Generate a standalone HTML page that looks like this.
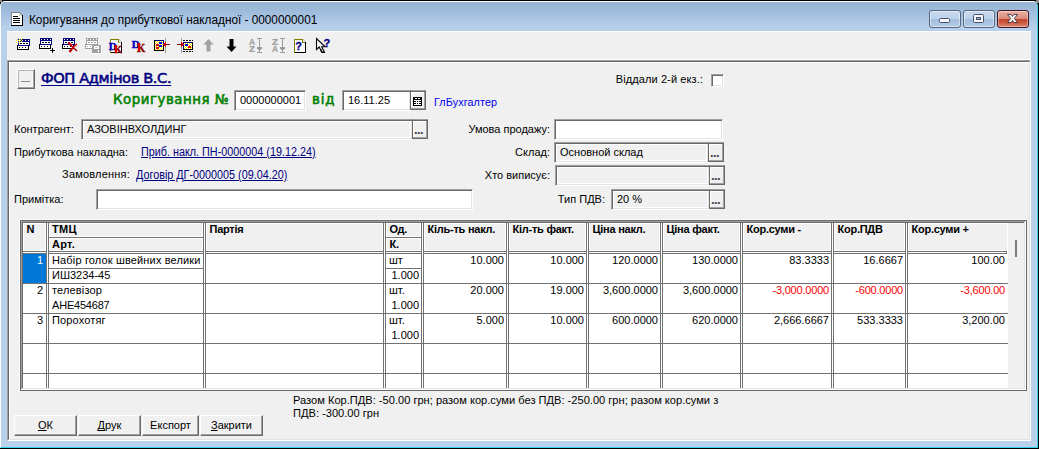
<!DOCTYPE html>
<html lang="uk"><head><meta charset="utf-8"><title>Коригування до прибуткової накладної</title>
<style>
*{box-sizing:border-box;margin:0;padding:0}
html,body{width:1039px;height:449px;overflow:hidden;background:#000}
body{font-family:"Liberation Sans",sans-serif;font-size:12px;color:#000;position:relative}
#win *{position:absolute}
#win u{position:static}
#win{position:absolute;left:0;top:0;width:1039px;height:449px;background:#000;overflow:hidden}
#frame{left:0;top:1px;width:1038px;height:447px;border:1px solid;border-color:#fdfeff #3ad6f0 #2fd3ee #fdfeff;border-radius:5px 5px 0 0;background:#b9d1ea}
#tbar{left:1px;top:2px;width:1036px;height:60px;border-radius:4px 4px 0 0;background:linear-gradient(#98b4d4 0,#9dbadb 8px,#a9c4e3 16px,#b5ceea 24px,#b9d1ea 30px,#b9d1ea 100%)}
#title{left:29px;top:13px;font-size:12.5px;line-height:15px;white-space:nowrap;color:#000;transform:scaleX(0.943);transform-origin:0 0}
#client{left:7px;top:31px;width:1024px;height:410px;background:#f0f0f0}
#tline0{left:7px;top:31px;width:1024px;height:1px;background:#fdfdfd}
#tline{left:7px;top:59px;width:1024px;height:1px;background:#fbfbfb}
.cb{border:1px solid #56657d;border-radius:3px;background:linear-gradient(#c6d8ef 0,#bdd2ec 47%,#a2bcdb 50%,#b3cbe7 100%);box-shadow:inset 0 0 0 1px rgba(255,255,255,.5)}
.cb.cx{border-color:#431422;background:linear-gradient(#ecb0a3 0,#d98c7b 47%,#c2432a 50%,#c85338 70%,#d98672 100%);box-shadow:inset 0 0 0 1px rgba(255,255,255,.4)}
#panel{left:7px;top:60px;width:1024px;height:381px;border:1px solid;border-color:#a0a0a0 #fff #fff #a0a0a0}
#panel2{left:8px;top:61px;width:1022px;height:379px;border:1px solid;border-color:#696969 #e3e3e3 #e3e3e3 #696969;box-shadow:inset 1px 1px 0 #fff}
.lbl{white-space:nowrap;line-height:14px;font-size:11px}
.r{text-align:right}
.inp{border:1px solid;border-color:#a0a0a0 #fff #fff #a0a0a0;box-shadow:inset 1px 1px 0 #696969,inset -1px -1px 0 #e3e3e3;background:#fff;font-size:11px;line-height:15px;padding:2px 0 0 5px;white-space:nowrap;overflow:hidden}
.inp.g{background:#f0f0f0;box-shadow:inset 1px 1px 0 #696969,inset -1px -1px 0 #e3e3e3,inset 2px 2px 0 #fff,inset -2px -2px 0 #fff}
.btn{background:#f0f0f0;border:1px solid;border-color:#fff #696969 #696969 #fff;box-shadow:inset -1px -1px 0 #a0a0a0;text-align:center}
.dots{font-weight:bold;font-size:11px;line-height:17px;letter-spacing:0}
.bb{font-size:11px;line-height:18px}
.link{color:#000080;text-decoration:underline;white-space:nowrap}
#org{font-family:"DejaVu Sans","Liberation Sans",sans-serif;font-weight:normal;font-size:14.67px;line-height:18px;letter-spacing:-0.4px;-webkit-text-stroke:0.55px #000080;text-decoration-skip-ink:none;text-underline-offset:2px;text-decoration-thickness:1px}
.big{font-family:"DejaVu Sans","Liberation Sans",sans-serif;font-weight:normal;font-size:13.33px;line-height:18px;letter-spacing:0.55px;-webkit-text-stroke:0.55px #008000;color:#008000;white-space:nowrap}
.s{font-size:12px;transform:scaleX(0.9);transform-origin:0 0}
.ebtn{background:#f0f0f0;border:1px solid;border-color:#a0a0a0 #696969 #696969 #696969;box-shadow:inset 0 1px 0 #696969,inset -1px -1px 0 #a0a0a0,inset 1px 2px 0 #fff}
#win .ebtn b{left:1px;top:2px;font-size:13px;line-height:15px;letter-spacing:-0.6px;color:#444;font-weight:bold}
#grid{left:19px;top:219px;width:1008px;height:172px;overflow:hidden}
.gf0{background:#fcfcfc}
.gf1{background:#696969}
.gf2{background:#a0a0a0;border:solid #fff;border-width:0 1px 1px 0}
.gf3{background:#696969;border:solid #e3e3e3;border-width:0 1px 1px 0}
.hbg{background:#fff}
.gbg{background:#fff}
.hc{background:#f0f0f0;border:1px solid #fff;font-weight:bold;font-size:11px;line-height:11px;letter-spacing:-.25px;padding:0 0 0 2.5px;white-space:nowrap;overflow:hidden}
.vl,.hl{background:#727272}
.wl{background:#fff}
.dc{font-size:11px;line-height:15px;white-space:nowrap;overflow:hidden}
.sel{background:#0078d7}
.sb{background:#f0f0f0}
.thumb{background:#7e7e7e}
.tx{letter-spacing:.15px}
#win u{text-decoration-skip-ink:none}
</style></head><body>
<div id="win">
<div style="left:0;top:0;width:2px;height:2px;background:#8e8e8e"></div><div style="left:1036px;top:0;width:3px;height:3px;background:#8e8e8e"></div>
<div id="frame"></div>
<div id="tbar"></div>
<svg id="ticon" style="left:11px;top:12px" width="12" height="14" viewBox="0 0 12 14" shape-rendering="crispEdges"><path d="M0 0h8l4 4v10h-12z" fill="#000"/><path d="M0 0h8l3 3v10h-11z" fill="#808080"/><path d="M1 1h7v3h3v9h-10z" fill="#fff"/><path d="M8 1l3 3h-3z" fill="#d8d8d8"/><path d="M2 4.500h5M2 6.500h7M2 8.500h7M2 10.500h7" stroke="#000"/></svg>
<div id="title">Коригування до прибуткової накладної - 0000000001</div>
<div class="cb" style="left:929px;top:10px;width:32px;height:18px"></div>
<div class="cb" style="left:963px;top:10px;width:32px;height:18px"></div>
<div class="cb cx" style="left:997px;top:10px;width:32px;height:18px"></div>
<svg style="left:929px;top:10px" width="100" height="18" viewBox="929 10 100 18"><rect x="939.500" y="18.500" width="10" height="4" rx="1" fill="#f6f8fb" stroke="#47526a"/><rect x="973.500" y="14.500" width="10" height="8" rx="1" fill="#f6f8fb" stroke="#47526a"/><rect x="976.500" y="17.500" width="4" height="2" fill="#9db6d6" stroke="#47526a"/><path d="M1007.500 14.500h3.500l1.500 2 1.500-2h3.500l-3.200 4 3.200 4h-3.500l-1.500-2-1.500 2h-3.500l3.200-4z" fill="#fafafa" stroke="#4b4050" stroke-width="1" stroke-linejoin="round"/></svg>
<div id="client"></div><div id="tline0"></div><div id="tline"></div>
<svg id="tbicons" style="left:8px;top:32px" width="340" height="27" viewBox="8 32 340 27" shape-rendering="crispEdges">
<!-- 1 new table -->
<g>
<rect x="18" y="39" width="12" height="7" fill="#000080"/>
<path d="M22 40.5h1M25 40.5h1M28 40.5h1" stroke="#fff"/>
<rect x="19" y="42" width="10" height="3" fill="#fff"/>
<path d="M20 43.5h2M23 43.5h2M26 43.5h2" stroke="#000"/>
<path d="M17 45h1v1h11v4h-12z" fill="#000"/>
<rect x="18" y="46" width="10" height="3" fill="#fff"/>
<path d="M19 47.5h1M22 47.5h1M25 47.5h1" stroke="#000"/>
<path d="M22 38.5h1M19 39.5h1M21 39.5h1M16 40.5h1M18 40.5h3M19 41.5h1M21 41.5h1M16 42.5h1M19 43.5h1" stroke="#f8f000"/><path d="M19 40.500h1M17 38.500h1M20 38.500h1M17 41.500h1" stroke="#fff"/><path d="M18 38.500h1M18 42.500h1M17 39.500h1" stroke="#b0b0b0"/>
</g>
<!-- 2 add row -->
<g>
<path d="M49 49.500h7M49 50.500h7M49 51.500h7M51 48v6M52 48v6M53 48v6" stroke="#fff" stroke-width="1"/>
<rect x="40" y="38" width="12" height="7" fill="#000080"/>
<path d="M41 39.5h1M44 39.5h1M47 39.5h1M50 39.5h1" stroke="#fff"/>
<rect x="41" y="41" width="10" height="3" fill="#fff"/>
<path d="M42 42.5h2M45 42.5h2M48 42.5h2" stroke="#000"/>
<path d="M39 44h1v1h11v4h-12z" fill="#000"/>
<rect x="40" y="45" width="10" height="3" fill="#fff"/>
<path d="M41 46.5h1M44 46.5h1M47 46.5h1" stroke="#000"/>
<path d="M50 50.500h5M52.500 48v5" stroke="#000"/>
</g>
<!-- 3 delete row -->
<g>
<rect x="63" y="38" width="12" height="7" fill="#000080"/>
<path d="M64 39.5h1M67 39.5h1M70 39.5h1M73 39.5h1" stroke="#fff"/>
<rect x="64" y="41" width="10" height="3" fill="#fff"/>
<path d="M65 42.5h2M68 42.5h2M71 42.5h2" stroke="#000"/>
<path d="M62 44h1v1h11v4h-12z" fill="#000"/>
<rect x="63" y="45" width="10" height="3" fill="#fff"/>
<path d="M64 46.5h1M67 46.5h1M70 46.5h1" stroke="#000"/>
<path d="M68.500 42.500l3 3.500 5.500 5" stroke="#a00000" stroke-width="1.400" shape-rendering="auto" fill="none"/><path d="M68.300 42.800l3.500 3" stroke="#d00000" stroke-width="2" shape-rendering="auto" fill="none"/><path d="M77 44l-4 3.500-3.500 4" stroke="#e00000" stroke-width="1.300" shape-rendering="auto" fill="none"/><path d="M72 49l-2.500 3" stroke="#c00000" stroke-width="2.200" shape-rendering="auto" fill="none"/>
</g>
<!-- 4 disabled copy -->
<g>
<rect x="86" y="38" width="12" height="7" fill="#a0a0a0"/>
<path d="M87 39.5h1M90 39.5h1M93 39.5h1M96 39.5h1" stroke="#fff"/>
<rect x="87" y="41" width="10" height="3" fill="#fff"/>
<path d="M88 42.5h2M91 42.5h2M94 42.5h2" stroke="#a0a0a0"/>
<path d="M85 44h1v1h11v4h-12z" fill="#a0a0a0"/>
<rect x="86" y="45" width="10" height="3" fill="#fff"/>
<path d="M87 46.5h1M90 46.5h1M93 46.5h1" stroke="#a0a0a0"/>
<rect x="93" y="46" width="9" height="8" fill="#fff"/><rect x="92" y="45" width="9" height="8" fill="#a0a0a0"/><rect x="94" y="46" width="5" height="3" fill="#fff"/><path d="M95 47.500h3" stroke="#d0d0d0"/><rect x="98" y="50" width="1" height="2" fill="#fff"/>
</g>
<!-- 5 doc DK -->
<g>
<path d="M119 39l3 3v1h-3z" fill="#c8c8c8"/><path d="M121 42h1v11h-12v-1h11z" fill="#000"/>
<path d="M110 39h9v4h2v9h-10v1h-1z" fill="#808000"/>
<path d="M111 40h7v3h3v9h-10z" fill="#fff"/>
<path d="M119 40l2 2h-2z" fill="#e0e0e0"/>
<text x="108.800" y="50" font-family="Liberation Serif,serif" font-weight="bold" font-size="11" fill="#0000c0" stroke="#0000c0" stroke-width=".45" textLength="8" lengthAdjust="spacingAndGlyphs">D</text>
<text x="114" y="53" font-family="Liberation Serif,serif" font-weight="bold" font-size="11" fill="#880000" stroke="#880000" stroke-width=".4" textLength="8" lengthAdjust="spacingAndGlyphs">K</text>
<rect x="115" y="45" width="2" height="8" fill="#e00000"/>
</g>
<!-- 6 DK -->
<g>
<text x="131.800" y="48" font-family="Liberation Serif,serif" font-weight="bold" font-size="11" fill="#0000c0" stroke="#0000c0" stroke-width=".45" textLength="8" lengthAdjust="spacingAndGlyphs">D</text>
<text x="137" y="51.500" font-family="Liberation Serif,serif" font-weight="bold" font-size="11.500" fill="#880000" stroke="#880000" stroke-width=".4" textLength="8.300" lengthAdjust="spacingAndGlyphs">K</text>
<rect x="138" y="43" width="2" height="8" fill="#e00000"/>
</g>
<!-- 7 box arrow in -->
<g>
<rect x="154" y="40" width="10" height="11" fill="#000"/><path d="M155 40.500h9" stroke="#000080"/><path d="M163.500 40v4" stroke="#000080"/>
<rect x="155" y="41" width="8" height="9" fill="#fff"/>
<path d="M155 41.5h1M157 41.5h1M159 41.5h1M161 41.5h1M156 42.5h1M158 42.5h1M160 42.5h1M162 42.5h1M155 43.5h1M157 43.5h1M159 43.5h1M161 43.5h1M156 44.5h1M158 44.5h1M160 44.5h1M162 44.5h1M155 45.5h1M157 45.5h1M159 45.5h1M161 45.5h1M156 46.5h1M158 46.5h1M160 46.5h1M162 46.5h1M155 47.5h1M157 47.5h1M159 47.5h1M161 47.5h1M156 48.5h1M158 48.5h1M160 48.5h1M162 48.5h1M155 49.5h1M157 49.5h1M159 49.5h1M161 49.5h1" stroke="#f8f000"/>
<rect x="159" y="42" width="3" height="2" fill="#0000e8"/><rect x="159" y="45" width="3" height="2" fill="#0000e8"/><rect x="156" y="44" width="3" height="2" fill="#e80000"/><rect x="156" y="47" width="3" height="2" fill="#e80000"/>
<path d="M165.500 38v15" stroke="#a0a0a0"/>
<path d="M164 44.500h6" stroke="#800000"/><path d="M163 44.500h2M164 43.500h2M164 45.500h2M165 42.500h1M165 46.500h1" stroke="#e80000"/>
</g>
<!-- 8 arrow box out -->
<g>
<path d="M181.500 38v15" stroke="#a0a0a0"/>
<path d="M183 40.500h10M183 51.500h10" stroke="#000" stroke-dasharray="2 1"/>
<rect x="183" y="42" width="10" height="8" fill="#000"/><path d="M183 42.500h10M183.500 42v7" stroke="#000080"/>
<rect x="184" y="43" width="8" height="6" fill="#fff"/>
<path d="M185 43.5h1M187 43.5h1M189 43.5h1M191 43.5h1M184 44.5h1M186 44.5h1M188 44.5h1M190 44.5h1M185 45.5h1M187 45.5h1M189 45.5h1M191 45.5h1M184 46.5h1M186 46.5h1M188 46.5h1M190 46.5h1M185 47.5h1M187 47.5h1M189 47.5h1M191 47.5h1M184 48.5h1M186 48.5h1M188 48.5h1M190 48.5h1" stroke="#f8f000"/>
<rect x="185" y="44" width="3" height="2" fill="#0000e8"/><rect x="188" y="46" width="3" height="2" fill="#e80000"/>
<path d="M177 44.500h6" stroke="#800000"/><path d="M182 44.500h2M181 43.500h2M181 45.500h2M181 42.500h1M181 46.500h1" stroke="#e80000"/>
</g>
<!-- 9 up gray -->
<path d="M208.500 39l5 5.500h-3v7h-4v-7h-3z" fill="#a0a0a0" shape-rendering="auto"/>
<!-- 10 down black -->
<path d="M231.500 52l-5-5.500h3v-7.500h4v7.500h3z" fill="#000" shape-rendering="auto"/>
<!-- 11 AZ -->
<g fill="#9c9c9c" stroke="#9c9c9c">
<text x="249" y="45" font-family="Liberation Sans,sans-serif" font-weight="bold" font-size="8.300" stroke-width=".2" textLength="6" lengthAdjust="spacingAndGlyphs">A</text>
<text x="249" y="52" font-family="Liberation Sans,sans-serif" font-weight="bold" font-size="8.300" stroke-width=".2" textLength="6" lengthAdjust="spacingAndGlyphs">Z</text>
<path d="M257 38.500h5M259.5 38v15M257 47.500h5M257 48.500h5M258 49.500h3M257 52.500h5" fill="none"/>
</g>
<!-- 12 ZA -->
<g fill="#9c9c9c" stroke="#9c9c9c">
<text x="272" y="45" font-family="Liberation Sans,sans-serif" font-weight="bold" font-size="8.300" stroke-width=".2" textLength="6" lengthAdjust="spacingAndGlyphs">Z</text>
<text x="272" y="52" font-family="Liberation Sans,sans-serif" font-weight="bold" font-size="8.300" stroke-width=".2" textLength="6" lengthAdjust="spacingAndGlyphs">A</text>
<path d="M280 38.500h5M282.5 38v15M280 47.500h5M280 48.500h5M281 49.500h3M280 52.500h5" fill="none"/>
</g>
<!-- 13 doc ? -->
<g>
<path d="M303 39l3 3v1h-3z" fill="#c8c8c8"/><path d="M305 42h1v11h-12v-1h11z" fill="#000"/>
<path d="M294 39h9v3h2v10h-10v1h-1z" fill="#808000"/>
<path d="M295 40h7v3h3v9h-10z" fill="#fff"/>
<path d="M303 40l2 2h-2z" fill="#e0e0e0"/>
<text x="295.300" y="50" font-family="Liberation Sans,sans-serif" font-weight="bold" font-size="11" fill="#000080" stroke="#000080" stroke-width=".3" shape-rendering="auto">?</text>
</g>
<!-- 14 cursor ? -->
<g shape-rendering="auto">
<path d="M316.500 38.500v11l2.700-2.500 2.600 5.300 2.700-.1-2.800-5.400h3.500z" fill="#f4f4f4" stroke="#000" stroke-width="1.100"/>
<path d="M320.500 49l1.500 3.300h2.500" fill="none" stroke="#000" stroke-width="1.300"/>
<text x="323.500" y="47" font-family="Liberation Sans,sans-serif" font-weight="bold" font-size="11" fill="#000080" stroke="#000080" stroke-width=".3">?</text>
</g>
</svg>

<div id="panel"></div><div id="panel2"></div>
<div class="btn" style="left:17px;top:69px;width:18px;height:20px;box-shadow:inset -1px -1px 0 #a0a0a0,inset 1px 1px 0 #b4b4b4,inset -2px -2px 0 #fafafa"><div style="left:3px;top:11px;width:9px;height:1px;background:#8c8c8c"></div></div>
<div id="org" class="link" style="left:41px;top:69px">ФОП Адмінов В.С.</div>
<div class="big" style="left:113px;top:91px">Коригування №</div>
<div class="inp" style="left:234px;top:90px;width:72px;height:21px">0000000001</div>
<div class="big" style="left:312px;top:91px;letter-spacing:0.8px">від</div>
<div class="inp" style="left:342px;top:90px;width:69px;height:21px">16.11.25</div>
<div class="ebtn" style="left:410px;top:90px;width:16px;height:20px"><svg style="left:2px;top:6px" width="9" height="9" viewBox="0 0 9 9" shape-rendering="crispEdges"><rect width="9" height="9" fill="#000"/><path d="M2 1.500h2M5 1.500h2M1 3.500h7M1 5.500h7M1 7.500h7M3.500 3v5M5.500 3v5" stroke="#fff"/></svg></div>
<div class="lbl" style="left:433px;top:95px;color:#0000f0;font-size:10.8px;left:434px;letter-spacing:.1px">ГлБухгалтер</div>
<div class="lbl r" style="left:560px;width:143px;top:72px;letter-spacing:.1px">Віддали 2-й екз.:</div>
<div class="inp" style="left:711px;top:74px;width:13px;height:13px;padding:0"></div>
<div class="lbl t" style="left:14px;top:122px">Контрагент:</div>
<div class="inp g" style="left:81px;top:119px;width:332px;height:21px">АЗОВІНВХОЛДИНГ</div>
<div class="ebtn" style="left:412px;top:119px;width:16px;height:20px"><b>...</b></div>
<div class="lbl r" style="left:400px;width:150px;top:122px">Умова продажу:</div>
<div class="inp" style="left:554px;top:119px;width:169px;height:21px"></div>
<div class="lbl t" style="left:14px;top:145px">Прибуткова накладна:</div>
<div class="lbl link s" style="left:141px;top:145px">Приб. накл. ПН-0000004 (19.12.24)</div>
<div class="lbl r" style="left:400px;width:150px;top:145px">Склад:</div>
<div class="inp g" style="left:554px;top:142px;width:155px;height:21px">Основной склад</div>
<div class="ebtn" style="left:708px;top:142px;width:16px;height:20px"><b>...</b></div>
<div class="lbl r t" style="left:0px;width:130px;top:167px;letter-spacing:.2px">Замовлення:</div>
<div class="lbl link s" style="left:136px;top:168px">Договір ДГ-0000005 (09.04.20)</div>
<div class="lbl r" style="left:400px;width:150px;top:168px">Хто виписує:</div>
<div class="inp g" style="left:555px;top:165px;width:155px;height:21px"></div>
<div class="ebtn" style="left:709px;top:165px;width:16px;height:20px"><b>...</b></div>
<div class="lbl t" style="left:14px;top:192px">Примітка:</div>
<div class="inp" style="left:96px;top:189px;width:377px;height:21px"></div>
<div class="lbl r" style="left:500px;width:105px;top:192px">Тип ПДВ:</div>
<div class="inp g" style="left:611px;top:189px;width:99px;height:21px">20 %</div>
<div class="ebtn" style="left:709px;top:189px;width:16px;height:20px"><b>...</b></div>
<div id="grid">
<div class="gf0" style="left:0px;top:0px;width:1008px;height:172px;"></div>
<div class="gf1" style="left:1px;top:1px;width:1007px;height:171px;"></div>
<div class="gf2" style="left:2px;top:2px;width:1005px;height:169px;"></div>
<div class="gf3" style="left:3px;top:3px;width:1003px;height:167px;"></div>
<div class="hbg" style="left:4px;top:4px;width:985px;height:31px;"></div>
<div class="gbg" style="left:4px;top:35px;width:985px;height:134px;"></div>
<div class="sb" style="left:989px;top:4px;width:16px;height:165px;"></div>
<div class="hl" style="left:4px;top:32px;width:983px;height:1px;"></div>
<div class="hl" style="left:4px;top:34px;width:983px;height:1px;"></div>
<div class="vl" style="left:987px;top:32px;width:1px;height:3px;"></div>
<div class="vl" style="left:27px;top:4px;width:1px;height:165px;"></div>
<div class="vl" style="left:29px;top:4px;width:1px;height:165px;"></div>
<div class="wl" style="left:28px;top:4px;width:1px;height:165px;"></div>
<div class="vl" style="left:184px;top:4px;width:1px;height:165px;"></div>
<div class="vl" style="left:186px;top:4px;width:1px;height:165px;"></div>
<div class="wl" style="left:185px;top:4px;width:1px;height:165px;"></div>
<div class="vl" style="left:364px;top:4px;width:1px;height:165px;"></div>
<div class="vl" style="left:366px;top:4px;width:1px;height:165px;"></div>
<div class="wl" style="left:365px;top:4px;width:1px;height:165px;"></div>
<div class="vl" style="left:402px;top:4px;width:1px;height:165px;"></div>
<div class="vl" style="left:404px;top:4px;width:1px;height:165px;"></div>
<div class="wl" style="left:403px;top:4px;width:1px;height:165px;"></div>
<div class="vl" style="left:487px;top:4px;width:1px;height:165px;"></div>
<div class="vl" style="left:489px;top:4px;width:1px;height:165px;"></div>
<div class="wl" style="left:488px;top:4px;width:1px;height:165px;"></div>
<div class="vl" style="left:567px;top:4px;width:1px;height:165px;"></div>
<div class="vl" style="left:569px;top:4px;width:1px;height:165px;"></div>
<div class="wl" style="left:568px;top:4px;width:1px;height:165px;"></div>
<div class="vl" style="left:641px;top:4px;width:1px;height:165px;"></div>
<div class="vl" style="left:643px;top:4px;width:1px;height:165px;"></div>
<div class="wl" style="left:642px;top:4px;width:1px;height:165px;"></div>
<div class="vl" style="left:721px;top:4px;width:1px;height:165px;"></div>
<div class="vl" style="left:723px;top:4px;width:1px;height:165px;"></div>
<div class="wl" style="left:722px;top:4px;width:1px;height:165px;"></div>
<div class="vl" style="left:812px;top:4px;width:1px;height:165px;"></div>
<div class="vl" style="left:814px;top:4px;width:1px;height:165px;"></div>
<div class="wl" style="left:813px;top:4px;width:1px;height:165px;"></div>
<div class="vl" style="left:886px;top:4px;width:1px;height:165px;"></div>
<div class="vl" style="left:888px;top:4px;width:1px;height:165px;"></div>
<div class="wl" style="left:887px;top:4px;width:1px;height:165px;"></div>
<div class="hc" style="left:4px;top:4px;width:23px;height:28px;">N</div>
<div class="hc" style="left:30px;top:4px;width:154px;height:14px;letter-spacing:.3px;padding-left:2px;">ТМЦ</div>
<div class="hl" style="left:30px;top:18px;width:154px;height:1px;"></div>
<div class="hc" style="left:30px;top:19px;width:154px;height:13px;letter-spacing:.3px;padding-left:2px;">Арт.</div>
<div class="hc" style="left:187px;top:4px;width:177px;height:28px;">Партія</div>
<div class="hc" style="left:367px;top:4px;width:35px;height:14px;">Од.</div>
<div class="hl" style="left:367px;top:18px;width:35px;height:1px;"></div>
<div class="hc" style="left:367px;top:19px;width:35px;height:13px;">К.</div>
<div class="hc" style="left:405px;top:4px;width:82px;height:28px;">Кіль-ть накл.</div>
<div class="hc" style="left:490px;top:4px;width:77px;height:28px;">Кіл-ть факт.</div>
<div class="hc" style="left:570px;top:4px;width:71px;height:28px;">Ціна накл.</div>
<div class="hc" style="left:644px;top:4px;width:77px;height:28px;">Ціна факт.</div>
<div class="hc" style="left:724px;top:4px;width:88px;height:28px;">Кор.суми -</div>
<div class="hc" style="left:815px;top:4px;width:71px;height:28px;">Кор.ПДВ</div>
<div class="hc" style="left:889px;top:4px;width:100px;height:28px;">Кор.суми +</div>
<div class="hl" style="left:4px;top:64px;width:985px;height:1px;"></div>
<div class="hl" style="left:4px;top:94px;width:985px;height:1px;"></div>
<div class="hl" style="left:4px;top:124px;width:985px;height:1px;"></div>
<div class="hl" style="left:4px;top:154px;width:985px;height:1px;"></div>
<div class="sel" style="left:4px;top:35px;width:23px;height:29px;"></div>
<div class="hl" style="left:30px;top:49px;width:154px;height:1px;"></div>
<div class="hl" style="left:367px;top:49px;width:35px;height:1px;"></div>
<div class="dc r" style="left:4px;top:34px;width:20px;height:15px;color:#fff;">1</div>
<div class="dc tx" style="left:33px;top:34px;width:151px;height:15px;">Набір голок швейних велики</div>
<div class="dc" style="left:33px;top:49px;width:151px;height:15px;">ИШ3234-45</div>
<div class="dc" style="left:370px;top:34px;width:31px;height:15px;">шт</div>
<div class="dc r" style="left:367px;top:49px;width:33px;height:15px;">1.000</div>
<div class="dc r" style="left:405px;top:34px;width:80px;height:15px;">10.000</div>
<div class="dc r" style="left:490px;top:34px;width:75px;height:15px;">10.000</div>
<div class="dc r" style="left:570px;top:34px;width:69px;height:15px;">120.0000</div>
<div class="dc r" style="left:644px;top:34px;width:75px;height:15px;">130.0000</div>
<div class="dc r" style="left:724px;top:34px;width:86px;height:15px;">83.3333</div>
<div class="dc r" style="left:815px;top:34px;width:69px;height:15px;">16.6667</div>
<div class="dc r" style="left:889px;top:34px;width:97px;height:15px;">100.00</div>
<div class="dc r" style="left:4px;top:64px;width:20px;height:15px;">2</div>
<div class="dc tx" style="left:33px;top:64px;width:151px;height:15px;">телевізор</div>
<div class="dc" style="left:33px;top:79px;width:151px;height:15px;letter-spacing:-.2px;">АНЕ454687</div>
<div class="dc" style="left:370px;top:64px;width:31px;height:15px;">шт.</div>
<div class="dc r" style="left:367px;top:79px;width:33px;height:15px;">1.000</div>
<div class="dc r" style="left:405px;top:64px;width:80px;height:15px;">20.000</div>
<div class="dc r" style="left:490px;top:64px;width:75px;height:15px;">19.000</div>
<div class="dc r" style="left:570px;top:64px;width:69px;height:15px;">3,600.0000</div>
<div class="dc r" style="left:644px;top:64px;width:75px;height:15px;">3,600.0000</div>
<div class="dc r" style="left:724px;top:64px;width:86px;height:15px;color:#ff0000;letter-spacing:-.2px;">-3,000.0000</div>
<div class="dc r" style="left:815px;top:64px;width:69px;height:15px;color:#ff0000;letter-spacing:-.2px;">-600.0000</div>
<div class="dc r" style="left:889px;top:64px;width:97px;height:15px;color:#ff0000;letter-spacing:-.2px;">-3,600.00</div>
<div class="dc r" style="left:4px;top:94px;width:20px;height:15px;">3</div>
<div class="dc tx" style="left:33px;top:94px;width:151px;height:15px;">Порохотяг</div>
<div class="dc" style="left:370px;top:94px;width:31px;height:15px;">шт.</div>
<div class="dc r" style="left:367px;top:109px;width:33px;height:15px;">1.000</div>
<div class="dc r" style="left:405px;top:94px;width:80px;height:15px;">5.000</div>
<div class="dc r" style="left:490px;top:94px;width:75px;height:15px;">10.000</div>
<div class="dc r" style="left:570px;top:94px;width:69px;height:15px;">600.0000</div>
<div class="dc r" style="left:644px;top:94px;width:75px;height:15px;">620.0000</div>
<div class="dc r" style="left:724px;top:94px;width:86px;height:15px;">2,666.6667</div>
<div class="dc r" style="left:815px;top:94px;width:69px;height:15px;">533.3333</div>
<div class="dc r" style="left:889px;top:94px;width:97px;height:15px;">3,200.00</div>
<div class="thumb" style="left:996px;top:21px;width:2px;height:17px;"></div>
</div>
<div class="lbl" style="left:293px;top:394px;line-height:13px;font-size:11.1px;white-space:normal;width:440px">Разом Кор.ПДВ: -50.00 грн; разом кор.суми без ПДВ: -250.00 грн; разом кор.суми з ПДВ: -300.00 грн</div>
<div class="btn bb" style="left:14px;top:415px;width:63px;height:21px"><u>О</u>К</div>
<div class="btn bb" style="left:78px;top:415px;width:63px;height:21px"><u>Д</u>рук</div>
<div class="btn bb" style="left:142px;top:415px;width:57px;height:21px">Експорт</div>
<div class="btn bb" style="left:200px;top:415px;width:63px;height:21px"><u>З</u>акрити</div>
</div>
</body></html>
